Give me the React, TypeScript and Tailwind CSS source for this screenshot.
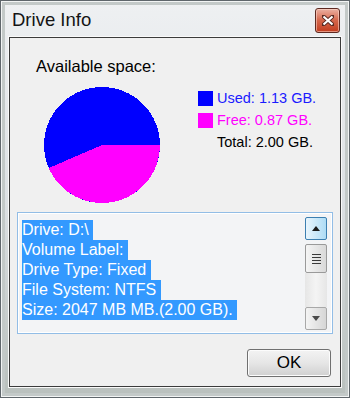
import React from "react";

const font = { fontFamily: '"Liberation Sans", Arial, sans-serif' };

function Pie() {
  const r = 58;
  const a = (156.6 * Math.PI) / 180;
  const ex = r + r * Math.cos(a);
  const ey = r + r * Math.sin(a);
  return (
    <svg width="116" height="116" viewBox="0 0 116 116" shapeRendering="crispEdges">
      <circle cx="58" cy="58" r="58" fill="#0000ff" />
      <path d={`M58 58 L116 58 A58 58 0 0 1 ${ex.toFixed(2)} ${ey.toFixed(2)} Z`} fill="#ff00ff" />
    </svg>
  );
}

function LegendRow({ color, text, textColor }: { color?: string; text: string; textColor: string }) {
  return (
    <div className="flex h-[22px] items-center">
      {color ? (
        <div className="h-[15px] w-[15px]" style={{ backgroundColor: color }} />
      ) : (
        <div className="h-[15px] w-[15px]" />
      )}
      <span className="ml-[4px] text-[14.5px] leading-[16px]" style={{ color: textColor }}>
        {text}
      </span>
    </div>
  );
}

function Scrollbar() {
  return (
    <div className="flex w-[22px] flex-col">
      <div className="flex h-[23px] items-center justify-center rounded-[2px] border border-[#3c7fb1] bg-gradient-to-r from-[#e8f5fd] to-[#aedcf5]">
        <svg width="8" height="5" viewBox="0 0 8 5">
          <path d="M0 5 L4 0 L8 5 Z" fill="#1b1b1b" />
        </svg>
      </div>
      <div className="mt-[4px] flex h-[29px] flex-col items-center justify-center gap-[2px] rounded-[2px] border border-[#9a9a9a] bg-gradient-to-r from-[#f5f5f5] to-[#d9d9d9]">
        <div className="h-[1px] w-[9px] bg-[#3a3a3a]" />
        <div className="h-[1px] w-[9px] bg-[#3a3a3a]" />
        <div className="h-[1px] w-[9px] bg-[#3a3a3a]" />
        <div className="h-[1px] w-[9px] bg-[#3a3a3a]" />
      </div>
      <div className="flex-1 bg-gradient-to-r from-[#e6e6e6] via-[#f4f4f4] to-[#e6e6e6]" />
      <div className="flex h-[23px] items-center justify-center rounded-[2px] border border-[#a8a8a8] bg-gradient-to-r from-[#f4f4f4] to-[#d6d6d6]">
        <svg width="8" height="5" viewBox="0 0 8 5">
          <path d="M0 0 L8 0 L4 5 Z" fill="#4a4a4a" />
        </svg>
      </div>
    </div>
  );
}

const lines = [
  "Drive: D:\\ ",
  "Volume Label: ",
  "Drive Type: Fixed ",
  "File System: NTFS ",
  "Size: 2047 MB MB.(2.00 GB). ",
];

export default function App() {
  return (
    <div
      className="flex h-[398px] w-[350px] flex-col border border-[#5f666b] bg-gradient-to-b from-[#eef0f2] via-[#dde1e4] to-[#b9c0bd] shadow-[inset_0_0_0_1px_#f2f4f4,inset_0_0_0_4px_#c3c9c8]"
      style={font}
    >
      {/* Title bar */}
      <div className="flex h-[36px] items-start justify-between">
        <div className="ml-[11px] mt-[8px] text-[18.5px] leading-[22px] text-[#141414]">Drive Info</div>
        <div className="mr-[9px] mt-[7px] flex h-[25px] w-[25px] items-center justify-center rounded-[3px] border border-[#5e2a22] bg-gradient-to-b from-[#eab0a2] via-[#d4654a] to-[#c23b1c] shadow-[inset_0_0_0_1px_rgba(255,220,210,0.55)]">
          <svg width="12" height="11" viewBox="0 0 12 11">
            <path d="M1 1 L11 10 M11 1 L1 10" stroke="#5a2a22" strokeWidth="4" strokeLinecap="square" />
            <path d="M1.5 1.5 L10.5 9.5 M10.5 1.5 L1.5 9.5" stroke="#ffffff" strokeWidth="2.2" />
          </svg>
        </div>
      </div>

      {/* Client area */}
      <div className="ml-[8px] flex h-[350px] w-[332px] flex-col border border-[#3b3b3b] bg-[#f0f0f0] shadow-[0_0_0_1px_#fafafa]">
        <div className="ml-[26px] mt-[19px] text-[16.5px] leading-[18px] text-black">Available space:</div>

        <div className="mt-[12px] flex">
          <div className="ml-[34px]">
            <Pie />
          </div>
          <div className="ml-[38px] flex flex-col">
            <LegendRow color="#0000ff" text="Used: 1.13 GB." textColor="#1a1aff" />
            <LegendRow color="#ff00ff" text="Free: 0.87 GB." textColor="#ff00ff" />
            <LegendRow text="Total: 2.00 GB." textColor="#000000" />
          </div>
        </div>

        {/* Text box */}
        <div className="ml-[7px] mt-[9px] flex h-[122px] w-[316px] border border-[#92bde6] bg-[#f3f4f6] pb-[3px] pr-[5px] pt-[4px] shadow-[inset_0_0_0_1px_#ffffff]">
          <div className="flex-1 pl-[4px] pt-[1px]">
            {lines.map((l, i) => (
              <div key={i} className="h-[20px]">
                <span className="inline-block h-[20px] whitespace-pre bg-[#3399ff] text-[16px] leading-[20px] text-white">
                  {l}
                </span>
              </div>
            ))}
          </div>
          <Scrollbar />
        </div>

        {/* OK button */}
        <div className="mr-[9px] mt-[15px] flex justify-end">
          <div className="flex h-[28px] w-[84px] items-center justify-center rounded-[3px] border border-[#707070] bg-gradient-to-b from-[#f3f3f3] via-[#e6e6e6] to-[#d0d0d0] text-[17px] leading-[20px] text-black shadow-[inset_0_0_0_1px_#fcfcfc]">
            OK
          </div>
        </div>
      </div>
    </div>
  );
}
